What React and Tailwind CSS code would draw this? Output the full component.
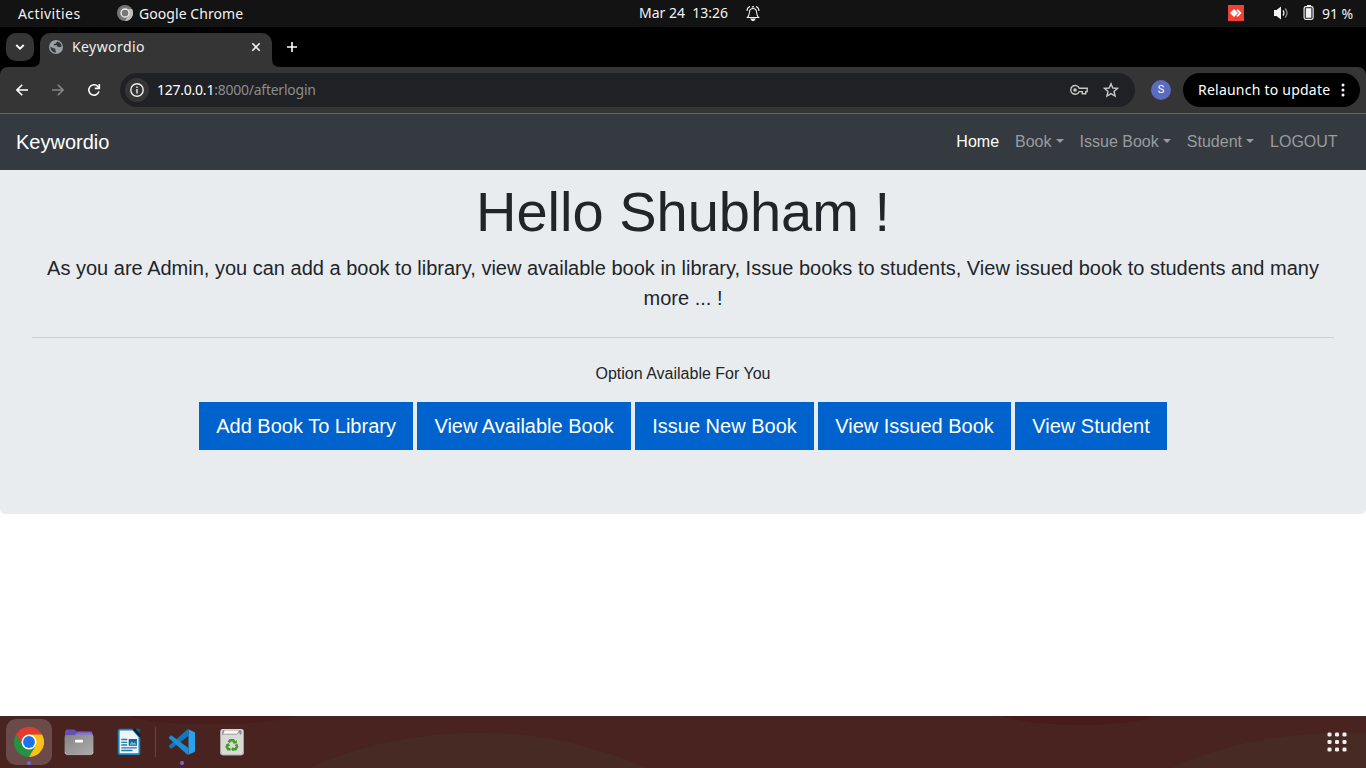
import React from 'react';

const SANS = "font-['Noto_Sans','Open_Sans',sans-serif]";

function TopBar() {
  return (
    <header className={`${SANS} flex h-[27px] items-center bg-[#131313] text-[14px] leading-[27px] text-[#f2f2f2]`}>
      <div className="w-[117px] pl-[18px] tracking-[0.42px]">Activities</div>
      <svg className="mb-px size-4" viewBox="0 0 16 16">
        <circle cx="8" cy="8" r="8" fill="#777" />
        <path d="M8 4H15A8 8 0 0 1 8 16L11.5 10Z" fill="#bdbdbd" />
        <circle cx="8" cy="8" r="4" fill="#777" stroke="#eee" strokeWidth="1.3" />
      </svg>
      <div className="w-[506px] pl-[6px] tracking-[0.06px]">Google Chrome</div>
      <div className="w-[107px] whitespace-pre pb-[2px] leading-[25px]">Mar 24  13:26</div>
      <svg className="mb-[2px] size-[14px] overflow-visible" viewBox="0 0 14 14" fill="none" stroke="#eee" strokeWidth="1.1">
        <path d="M1.5 11.5C3.5 9.5 3.2 7 3.7 4.7C4.4 1.8 9.6 1.8 10.3 4.7C10.8 7 10.5 9.5 12.5 11.5Z" />
        <path d="M4 .5Q1 1.5 1 5M10 .5Q13 1.5 13 5" />
        <path d="M5 13Q7 16.4 9 13Z" fill="#eee" />
        <path d="M6 1.5Q7 -.5 8 1.5" />
      </svg>
      <div className="ml-auto flex items-center pr-[12px]">
        <svg className="mb-px size-4" viewBox="0 0 16 16">
          <rect width="16" height="16" fill="#ef4136" />
          <path d="M6 4L10 8L6 12L2 8Z" fill="#fff" />
          <path d="M9 4.6L12.4 8L9 11.4" fill="none" stroke="#fff" strokeWidth="1.8" />
        </svg>
        <svg className="mb-px ml-[29px] h-[14px] w-4" viewBox="0 0 16 14">
          <path d="M1 4H3.5L8 .5V13.5L3.5 10H1Z" fill="#f2f2f2" />
          <path d="M10 4.3Q12 7 10 9.7" fill="none" stroke="#eee" strokeWidth="1.2" />
          <path d="M12.2 2.5Q16 7 12.2 11.5" fill="none" stroke="#999" strokeWidth="1.2" />
        </svg>
        <svg className="mb-[2px] ml-[14px] h-[15px] w-3" viewBox="0 0 12 15">
          <path d="M4 0H8V2H4Z" fill="#eee" />
          <rect x="1.1" y="1.6" width="9" height="12.8" rx="1.8" fill="none" stroke="#eee" strokeWidth="1.2" />
          <rect x="2.8" y="3.2" width="5.6" height="9.6" fill="#f2f2f2" />
        </svg>
        <div className="ml-[7px] w-[32px] whitespace-nowrap tracking-[-0.05px]">91 %</div>
      </div>
    </header>
  );
}

function TabStrip() {
  return (
    <div className={`${SANS} flex h-[40px] items-end bg-black`}>
      <div className="mb-[6px] ml-[6px] flex size-[28px] items-center justify-center rounded-[10px] bg-[#353535]">
        <svg className="size-[10px]" viewBox="0 0 10 10" fill="none" stroke="#fff" strokeWidth="1.8"><path d="M1.3 3L5 6.7L8.7 3" /></svg>
      </div>
      <svg className="-ml-[2px] h-[8px] w-[8px]" viewBox="0 0 8 8"><path d="M8 0V8H0Q8 8 8 0Z" fill="#353535" /></svg>
      <div className="flex h-[34px] w-[232px] items-center rounded-t-[10px] bg-[#353535] pb-[6px] pl-[9px] text-[14px] text-[#eee]">
        <svg className="size-[14px]" viewBox="0 0 14 14">
          <circle cx="7" cy="7" r="7" fill="#9aa0a6" />
          <path d="M1.4 6.5L4.2 8.2L6.3 8.4L6.2 9.8L7.2 12.7Q1.6 12.5 1.4 6.5ZM8 1.5Q12 2 12.7 6.2L11 7.2L8.4 6.7L7.5 5L5 5.6L4.8 4L7 3.5Z" fill="#353535" />
        </svg>
        <span className="ml-[9px] w-[179px] pb-[2px] tracking-[0.42px]">Keywordio</span>
        <svg className="size-[10px]" viewBox="0 0 10 10" stroke="#eee" strokeWidth="1.6"><path d="M1.3 1.3L8.7 8.7M8.7 1.3L1.3 8.7" /></svg>
      </div>
      <svg className="h-[8px] w-[8px]" viewBox="0 0 8 8"><path d="M0 0V8H8Q0 8 0 0Z" fill="#353535" /></svg>
      <svg className="mb-[15px] ml-[7px] size-[10px]" viewBox="0 0 10 10" stroke="#fff" strokeWidth="1.6"><path d="M5 0V10M0 5H10" /></svg>
    </div>
  );
}

function Toolbar() {
  return (
    <div className="bg-black">
      <div className={`${SANS} flex h-[47px] items-center rounded-t-[8px] border-b border-[#656565] bg-[#353535] pl-[16px] pr-[6px] text-[14px]`}>
        <svg className="size-3" viewBox="0 0 12 12" fill="none" stroke="#fff" strokeWidth="1.6"><path d="M12 6H1.3M6.2 .8L1 6L6.2 11.2" /></svg>
        <svg className="ml-6 size-3" viewBox="0 0 12 12" fill="none" stroke="#858585" strokeWidth="1.6"><path d="M0 6H10.7M5.8 .8L11 6L5.8 11.2" /></svg>
        <svg className="ml-6 size-3 overflow-visible" viewBox="0 0 12 12" fill="none" stroke="#fff" strokeWidth="1.6">
          <path d="M11 7.4A5.2 5.2 0 1 1 9.8 2.4L11.3 4" /><path d="M11.3 0V4.4H6.8" />
        </svg>
        <div className="ml-5 flex h-[34px] w-[1015px] items-center rounded-full bg-[#202124] pl-[5px]">
          <div className="flex size-6 items-center justify-center rounded-full bg-[#353535]">
            <svg className="size-[14px]" viewBox="0 0 14 14" fill="none" stroke="#eee" strokeWidth="1.4"><circle cx="7" cy="7" r="6.2" /><path d="M7 6V10.5M7 3.4V4.9" /></svg>
          </div>
          <span className="ml-[8px] pb-[2px] tracking-[-0.24px] text-[#8b8d90]"><span className="text-white">127.0.0.1</span>:8000/afterlogin</span>
          <svg className="ml-auto h-3 w-[18px]" viewBox="0 0 18 12" fill="none" stroke="#c7c7c7" strokeWidth="1.4">
            <path d="M9.2 4.2H17.2V7.6H15.7V9.8H12.3V7.6H9.2A4.4 4.4 0 1 1 9.2 4.2Z" /><circle cx="5" cy="6" r="1.8" fill="#c7c7c7" stroke="none" />
          </svg>
          <svg className="ml-[15px] mr-[16px] size-4" viewBox="0 0 16 16" fill="none" stroke="#c7c7c7" strokeWidth="1.4"><path d="M8 1.7L9.8 6L14.6 6.4L11 9.5L12.1 14.1L8 11.6L3.9 14.1L5 9.5L1.4 6.4L6.2 6Z" /></svg>
        </div>
        <div className="ml-[16px] flex size-5 items-center justify-center rounded-full bg-[#5c6bc0] font-['Roboto',sans-serif] text-[11px] text-white">S</div>
        <div className="ml-[12px] flex h-[34px] w-[177px] items-center rounded-full bg-black pl-[15px] text-white">
          <span className="w-[143px] whitespace-nowrap pb-[2px] tracking-[0.23px]">Relaunch to update</span>
          <svg className="h-[14px] w-1" viewBox="0 0 4 14" fill="#fff"><circle cx="2" cy="2" r="1.5" /><circle cx="2" cy="7" r="1.5" /><circle cx="2" cy="12" r="1.5" /></svg>
        </div>
      </div>
    </div>
  );
}

function NavLink({ label, active, caret }) {
  return (
    <a className={`px-2 py-2 ${active ? 'text-white' : 'text-[#999c9f]'}`}>
      {label}
      {caret && <span className="ml-[4.08px] inline-block border-x-[4.8px] border-t-[4.8px] border-x-transparent border-t-current align-[4px]" />}
    </a>
  );
}

function Page() {
  const buttons = ['Add Book To Library', 'View Available Book', 'Issue New Book', 'View Issued Book', 'View Student'];
  return (
    <main className="h-[602px] bg-white font-['Liberation_Sans',Arial,sans-serif] text-base text-[#212529]">
      <nav className="flex h-[56px] items-center bg-[#343a40] pl-4 pr-[20.4px]">
        <span className="text-[20px] leading-[30px] text-white">Keywordio</span>
        <div className="ml-auto flex">
          <NavLink label="Home" active />
          <NavLink label="Book" caret />
          <NavLink label="Issue Book" caret />
          <NavLink label="Student" caret />
          <NavLink label="LOGOUT" />
        </div>
      </nav>
      <section className="h-[344px] rounded-b-[5px] bg-[#e9ecef] px-8 pt-[8px] text-center">
        <h1 className="mb-2 text-[56px] leading-[67px]">Hello Shubham !</h1>
        <p className="text-[20px] leading-[30px]">As you are Admin, you can add a book to library, view available book in library, Issue books to students, View issued book to students and many more ... !</p>
        <hr className="my-6 border-t border-[#cccfd2]" />
        <p className="mb-4 leading-6">Option Available For You</p>
        <div>
          {buttons.map((label) => (
            <React.Fragment key={label}>
              <button className="inline-block h-12 bg-[#0062cc] px-[17px] text-[20px] leading-[30px] text-white">{label}</button>{' '}
            </React.Fragment>
          ))}
        </div>
      </section>
    </main>
  );
}

function ChromeIcon() {
  return (
    <svg className="size-[30px]" viewBox="0 0 48 48">
      <path d="M24 12H44.8A24 24 0 0 0 3.2 12L13.6 30Z" fill="#e33b2e" />
      <path d="M13.6 30L3.2 12A24 24 0 0 0 24 48L34.4 30Z" fill="#229342" />
      <path d="M34.4 30L24 48A24 24 0 0 0 44.8 12H24Z" fill="#fbc116" />
      <circle cx="24" cy="24" r="12" fill="#fff" />
      <circle cx="24" cy="24" r="9.5" fill="#1a73e8" />
    </svg>
  );
}

function Dock() {
  return (
    <footer className="relative flex h-[52px] items-center bg-[#482320]">
      <svg className="absolute inset-0 h-[52px] w-[1366px]" viewBox="0 0 1366 52">
        <path d="M130 0Q150 8 210 8Q270 8 296 0Z" fill="#481e1d" />
        <path d="M1000 0Q1035 9 1080 9Q1125 9 1158 0Z" fill="#471c1b" />
        <path d="M309 52C370 26 420 17 481 17C540 17 590 29 648 52Z" fill="#482a25" />
        <path d="M1172 52Q1245 17 1346 17L1366 17.5V52Z" fill="#482a25" />
      </svg>
      <div className="relative ml-[6px] flex size-[46px] items-center justify-center rounded-[10px] bg-[#6b4b49]">
        <ChromeIcon />
        <span className="absolute bottom-0 left-[21px] size-1 rounded-full bg-[#7764d8]" />
      </div>
      <svg className="relative ml-3 h-[28px] w-[30px]" viewBox="0 0 30 28">
        <defs><linearGradient id="folder" x2="1" y2="1"><stop stopColor="#858585" /><stop offset="1" stopColor="#acacac" /></linearGradient></defs>
        <path d="M1 4Q1 1.5 3 1.5H10L12.5 3.2H26.5Q28.6 3.2 28.6 5.5V12H1Z" fill="#6550ae" />
        <path d="M1 7H10.5L13.5 4.6H26.5Q28.6 4.6 28.6 7V12H1Z" fill="#8872d6" />
        <path d="M.6 9Q.6 7.8 2 7.8H11L13.5 6.8H27.5Q29.4 6.8 29.4 8.5V24.5Q29.4 26.6 27 26.6H3Q.6 26.6 .6 24.5Z" fill="url(#folder)" />
        <path d="M1.2 24Q1.4 26.6 3 26.6H27Q28.8 26.6 28.9 24" fill="none" stroke="#bdbdbd" strokeWidth=".8" />
        <rect x="11" y="11.8" width="8" height="2.6" rx=".7" fill="#fff" />
      </svg>
      <svg className="relative ml-[23px] h-[28px] w-[25px]" viewBox="0 0 25 28">
        <path d="M3 1.7H16L22.4 9V24.5Q22.4 26.2 20.5 26.2H3.5Q1.7 26.2 1.7 24.5V3.3Q1.7 1.7 3 1.7Z" fill="#eff6fa" stroke="#1a86bf" strokeWidth="1.8" />
        <path d="M15 .8L23.3 10V5.5L18.5 .8Z" fill="#12212c" />
        <path d="M18.2 .8H23.2V6Z" fill="#16577c" />
        <path d="M4.3 11.5H10.2M4.3 14.3H10.2M4.3 17H10.2M4.3 19.8H19.8M4.3 22.5H15.5" stroke="#2578a8" strokeWidth="1.3" />
        <rect x="11.7" y="11" width="8.2" height="6.8" fill="#136796" />
        <path d="M12.6 16.8L14.7 13.4L16.5 15.2L17.7 14L19.3 16.8Z" fill="#70bde0" />
      </svg>
      <div className="relative ml-[13px] h-[30px] w-px bg-[#604642]" />
      <svg className="relative ml-[12px] h-[28px] w-[28px]" viewBox="0 0 28 28">
        <path d="M3.2 20.8L1.2 19Q.5 18.3 1.2 17.6L19.7 1L20.5 8Z" fill="#0c79be" />
        <path d="M3.2 7.2L1.2 9Q.5 9.7 1.2 10.4L19.7 27L20.5 20Z" fill="#1c8ed3" />
        <path d="M19.6 1L26.4 4.1Q27 4.4 27 5V23Q27 23.6 26.4 23.9L19.6 27Q20.5 26.5 20.5 25V3Q20.5 1.5 19.6 1Z" fill="#28a2ed" />
      </svg>
      <span className="absolute bottom-[3px] left-[180px] size-1 rounded-full bg-[#7764d8]" />
      <svg className="relative ml-[24px] h-[28px] w-[24px]" viewBox="0 0 24 28">
        <rect x=".3" y=".9" width="23.4" height="26.4" rx="2.5" fill="#d9d9d6" />
        <path d="M.6 24Q.6 26.9 3 26.9H21Q23.4 26.9 23.4 24" fill="none" stroke="#aaaaa7" strokeWidth=".8" />
        <path d="M2.5 2.2H21.5V6.5H20L19 4.2L17 6.4H3.5L2 6.8Z" fill="#8d8d8b" />
        <path d="M4.5 2.5H19L17 5.8H3.3Z" fill="#f8f8f8" />
        <g transform="translate(1.1 1.7) scale(.91)" fill="none" stroke="#449b29" strokeWidth="2.8">
          <path d="M8.4 14L10 11.6H13.3L14.9 14" />
          <path d="M16.4 16L17.6 18.5L16 21.5H12.8" />
          <path d="M10.3 21.5H7.8L6.2 18.8L7.8 16" />
        </g>
        <path transform="translate(1.1 1.7) scale(.91)" d="M13 15.2H17.3V11.4ZM13.4 18.8V24L10.8 21.4ZM5 16.8L8 14.6L10 18Z" fill="#449b29" />
      </svg>
      <svg className="relative ml-auto mr-[19px] size-5" viewBox="0 0 20 20" fill="#f2f0ef">
        {[2.5, 10, 17.5].map((y) => [2.5, 10, 17.5].map((x) => <rect key={`${x}-${y}`} x={x - 2} y={y - 2} width="4" height="4" rx="1.3" />))}
      </svg>
    </footer>
  );
}

export default function App() {
  return (
    <div className="flex h-[768px] w-[1366px] flex-col overflow-hidden">
      <TopBar />
      <TabStrip />
      <Toolbar />
      <Page />
      <Dock />
    </div>
  );
}
